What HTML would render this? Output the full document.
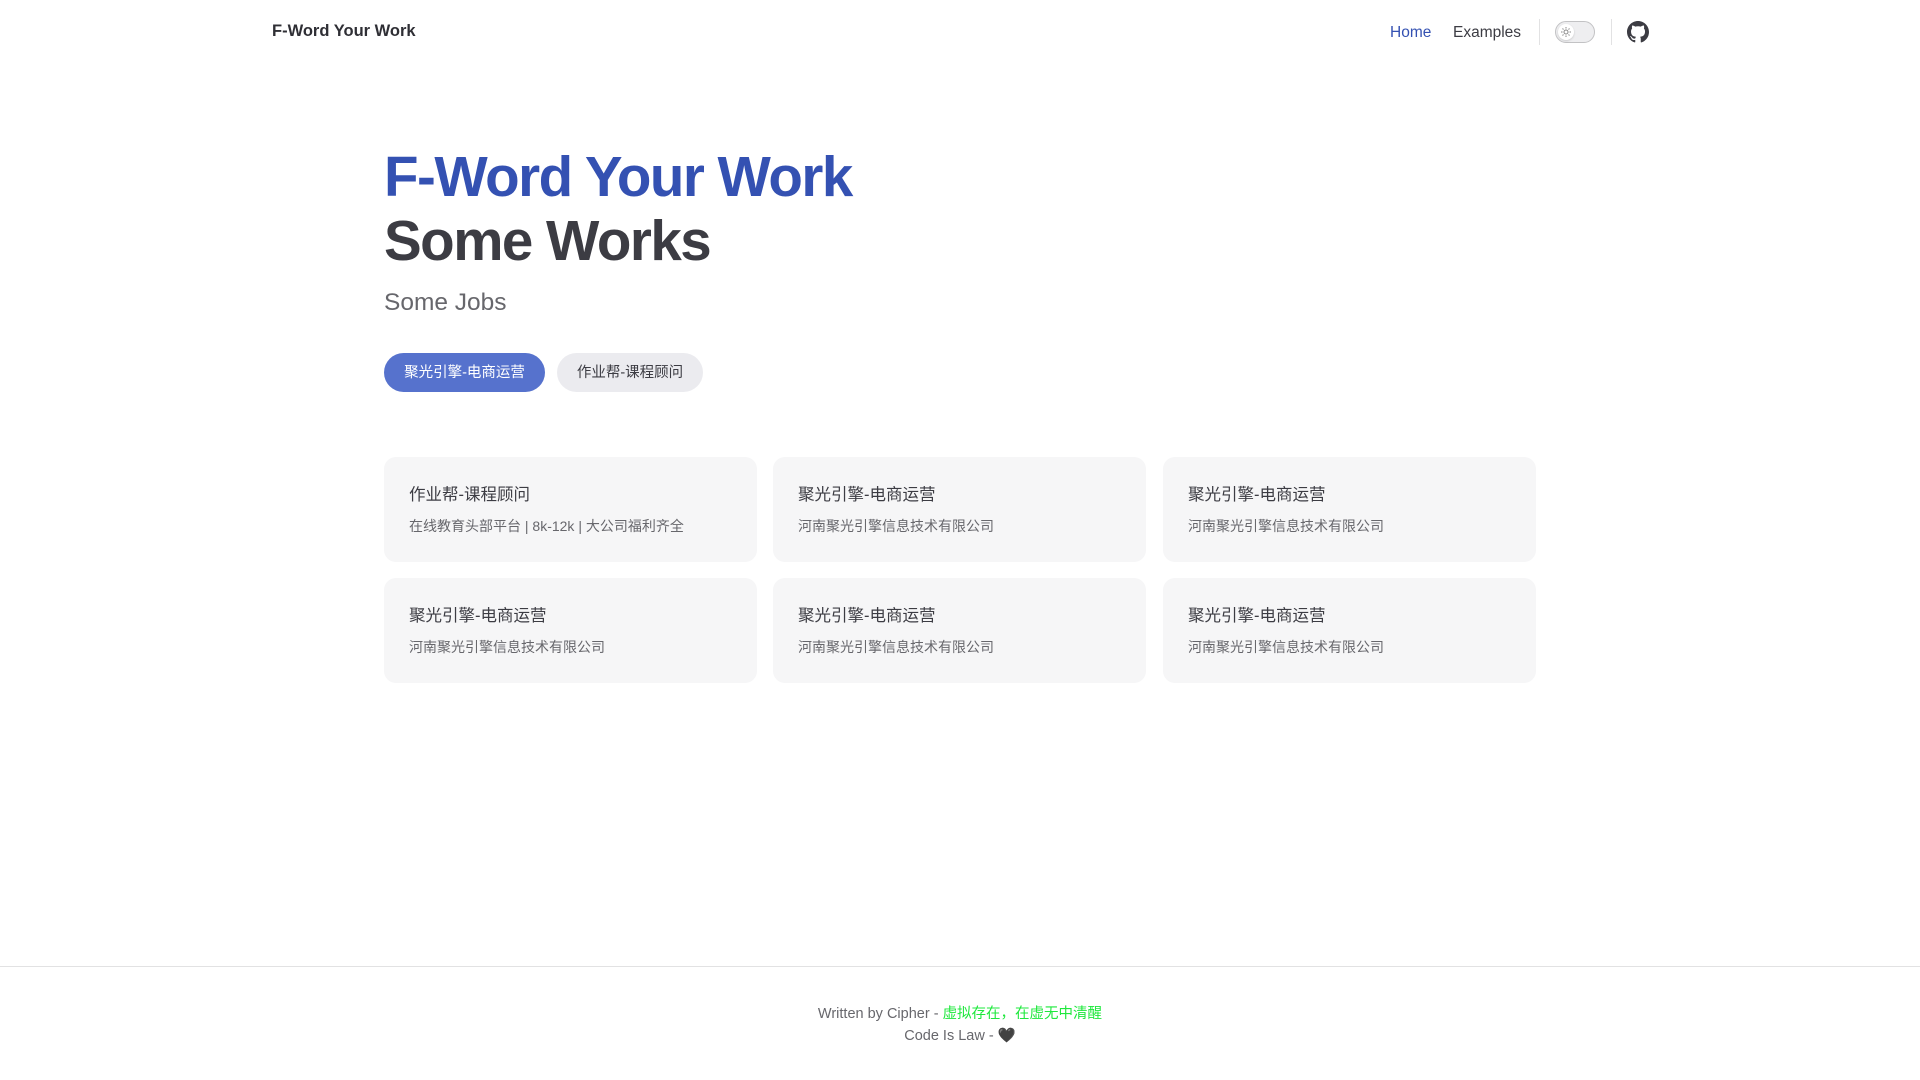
<!DOCTYPE html>
<html><head><meta charset="utf-8"><style>
*{box-sizing:border-box;margin:0;padding:0}
body{width:1920px;height:1080px;background:#fff;font-family:"Liberation Sans","Noto Sans CJK SC",sans-serif;color:#3c3c43;position:relative;overflow:hidden}
.abs{position:absolute}
.brand{left:272px;top:22px;font-size:16.5px;font-weight:bold;color:#2f2f35}
.nav{top:24px;font-size:15.5px}
.div{width:1px;height:26px;background:#e2e2e3;top:19px}
.tog{left:1555px;top:21px;width:40px;height:22px;border-radius:11px;background:#eeeef0;border:1px solid #c2c2c4}
.tog i{position:absolute;left:2px;top:2px;width:16px;height:16px;border-radius:50%;background:#fff;box-shadow:0 1px 2px rgba(0,0,0,.15)}
h1{position:absolute;left:384px;font-size:56.5px;font-weight:bold;letter-spacing:-1.5px;line-height:64px}
.sub{left:384px;top:289px;font-size:24.5px;color:#67676c}
.btn{top:353px;height:39px;border-radius:20px;font-size:14.5px;line-height:40px;text-align:center}
.card{width:373px;height:105px;background:#f6f6f7;border-radius:12px;padding:24px 25px}
.card b{display:block;font-weight:normal;font-size:16.5px;color:#3c3c43}
.card span{display:block;margin-top:11px;font-size:14px;color:#67676c}
.foot{left:0;right:0;top:966px;border-top:1px solid #e2e2e3}
.ft{left:0;right:0;text-align:center;font-size:14.5px;color:#67676c}
</style></head><body>
<div class="abs brand">F-Word Your Work</div>
<div class="abs nav" style="left:1390px;color:#3451b2">Home</div>
<div class="abs nav" style="left:1453px;color:#3c3c43">Examples</div>
<div class="abs div" style="left:1539px"></div>
<div class="abs tog"><i><svg width="16" height="16" viewBox="0 0 16 16"><circle cx="8" cy="8" r="2" fill="none" stroke="#888" stroke-width="1"/><g stroke="#888" stroke-width="1"><path d="M8 3v1.5M8 11.5V13M3 8h1.5M11.5 8H13M4.5 4.5l1 1M10.5 10.5l1 1M4.5 11.5l1-1M10.5 5.5l1-1"/></g></svg></i></div>
<div class="abs div" style="left:1611px"></div>
<svg class="abs" style="left:1627px;top:21px" width="22" height="22" viewBox="0 0 16 16"><path fill="#3c3c43" d="M8 0C3.58 0 0 3.58 0 8c0 3.540 2.29 6.53 5.47 7.59.4.07.55-.17.55-.38 0-.19-.01-.82-.01-1.49-2.01.37-2.530-.49-2.69-.94-.09-.23-.48-.94-.82-1.13-.28-.15-.68-.52-.01-.53.63-.01 1.08.58 1.23.82.72 1.21 1.87.87 2.33.66.07-.52.28-.87.51-1.07-1.78-.2-3.64-.89-3.64-3.95 0-.87.31-1.59.82-2.15-.08-.2-.36-1.02.08-2.12 0 0 .67-.21 2.2.82.64-.18 1.32-.27 2-.27.68 0 1.36.09 2 .27 1.53-1.04 2.2-.82 2.2-.82.44 1.1.16 1.92.08 2.12.51.56.82 1.27.82 2.15 0 3.07-1.87 3.75-3.65 3.95.29.25.54.73.54 1.48 0 1.07-.01 1.93-.01 2.2 0 .21.15.46.55.38A8.013 8.013 0 0016 8c0-4.42-3.58-8-8-8z"/></svg>
<h1 style="top:145px;color:#3451b2">F-Word Your Work</h1>
<h1 style="top:209px;color:#3c3c43">Some Works</h1>
<div class="abs sub">Some Jobs</div>
<div class="abs btn" style="left:384px;width:161px;background:#5672cd;color:#fff">聚光引擎-电商运营</div>
<div class="abs btn" style="left:557px;width:146px;background:#ebebef;color:#3c3c43">作业帮-课程顾问</div>
<div class="abs card" style="left:384px;top:457px"><b>作业帮-课程顾问</b><span>在线教育头部平台 | 8k-12k | 大公司福利齐全</span></div>
<div class="abs card" style="left:773px;top:457px"><b>聚光引擎-电商运营</b><span>河南聚光引擎信息技术有限公司</span></div>
<div class="abs card" style="left:1163px;top:457px"><b>聚光引擎-电商运营</b><span>河南聚光引擎信息技术有限公司</span></div>
<div class="abs card" style="left:384px;top:578px"><b>聚光引擎-电商运营</b><span>河南聚光引擎信息技术有限公司</span></div>
<div class="abs card" style="left:773px;top:578px"><b>聚光引擎-电商运营</b><span>河南聚光引擎信息技术有限公司</span></div>
<div class="abs card" style="left:1163px;top:578px"><b>聚光引擎-电商运营</b><span>河南聚光引擎信息技术有限公司</span></div>
<div class="abs foot"></div>
<div class="abs ft" style="top:1002px">Written by Cipher - <span style="color:#1ee83c">虚拟存在，在虚无中清醒</span></div>
<div class="abs ft" style="top:1027px">Code Is Law - 🖤</div>
</body></html>
